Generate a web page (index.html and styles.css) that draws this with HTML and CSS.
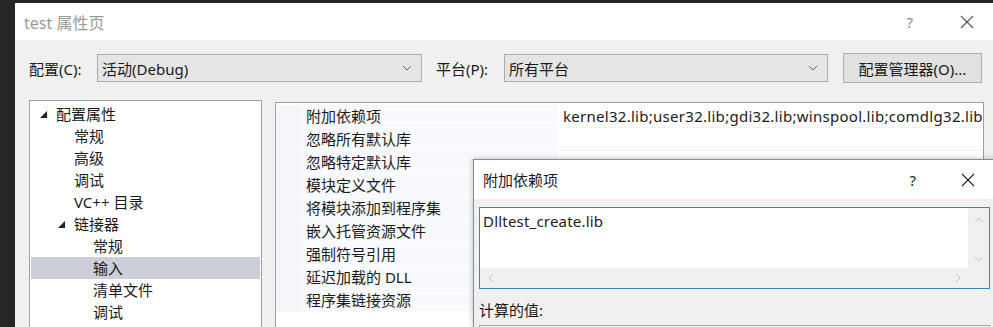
FILE: index.html
```html
<!DOCTYPE html>
<html lang="zh">
<head>
<meta charset="utf-8">
<title>test 属性页</title>
<link rel="stylesheet" href="styles.css">
</head>
<body>
<div class="screen">
  <div class="dialog">
    <div class="titlebar">
      <span class="title">test 属性页</span>
      <span class="tb-help">?</span>
      <span class="tb-close"><svg width="14" height="14" viewBox="0 0 14 14"><path d="M1 1L13 13M13 1L1 13" stroke="#555" stroke-width="1.1" fill="none"/></svg></span>
    </div>
    <div class="toolbar">
      <span class="lbl">配置(C):</span>
      <div class="select sel1"><span>活动(Debug)</span><svg class="chev" width="10" height="6" viewBox="0 0 10 6"><path d="M1 1L5 5L9 1" stroke="#666" fill="none"/></svg></div>
      <span class="lbl lbl2">平台(P):</span>
      <div class="select sel2"><span>所有平台</span><svg class="chev" width="10" height="6" viewBox="0 0 10 6"><path d="M1 1L5 5L9 1" stroke="#666" fill="none"/></svg></div>
      <div class="btn">配置管理器(O)...</div>
    </div>
    <div class="main">
      <div class="tree">
        <div class="node lv0"><svg class="tri" width="7" height="7" viewBox="0 0 7 7"><path d="M7 0L7 7L0 7Z" fill="#222"/></svg>配置属性</div>
        <div class="node lv1">常规</div>
        <div class="node lv1">高级</div>
        <div class="node lv1">调试</div>
        <div class="node lv1">VC++ 目录</div>
        <div class="node lv1b"><svg class="tri" width="7" height="7" viewBox="0 0 7 7"><path d="M7 0L7 7L0 7Z" fill="#222"/></svg>链接器</div>
        <div class="node lv2">常规</div>
        <div class="node lv2 sel">输入</div>
        <div class="node lv2">清单文件</div>
        <div class="node lv2">调试</div>
      </div>
      <div class="grid">
        <div class="row"><div class="gut"></div><div class="name">附加依赖项</div><div class="val">kernel32.lib;user32.lib;gdi32.lib;winspool.lib;comdlg32.lib</div></div>
        <div class="row"><div class="gut"></div><div class="name">忽略所有默认库</div><div class="val"></div></div>
        <div class="row"><div class="gut"></div><div class="name">忽略特定默认库</div><div class="val"></div></div>
        <div class="row"><div class="gut"></div><div class="name">模块定义文件</div><div class="val"></div></div>
        <div class="row"><div class="gut"></div><div class="name">将模块添加到程序集</div><div class="val"></div></div>
        <div class="row"><div class="gut"></div><div class="name">嵌入托管资源文件</div><div class="val"></div></div>
        <div class="row"><div class="gut"></div><div class="name">强制符号引用</div><div class="val"></div></div>
        <div class="row"><div class="gut"></div><div class="name">延迟加载的 DLL</div><div class="val"></div></div>
        <div class="row"><div class="gut"></div><div class="name">程序集链接资源</div><div class="val"></div></div>
      </div>
    </div>
  </div>

  <div class="subdlg">
    <div class="sub-title">
      <span>附加依赖项</span>
      <span class="sub-help">?</span>
      <span class="sub-close"><svg width="14" height="14" viewBox="0 0 14 14"><path d="M1 1L13 13M13 1L1 13" stroke="#222" stroke-width="1.1" fill="none"/></svg></span>
    </div>
    <div class="sub-body">
      <div class="editbox">
        <div class="edit-area">
          <div class="edit-text">Dlltest_create.lib</div>
          <div class="vscroll">
            <svg width="10" height="6" viewBox="0 0 10 6"><path d="M1 5L5 1L9 5" stroke="#c2c2c2" fill="none"/></svg>
            <svg width="10" height="6" viewBox="0 0 10 6"><path d="M1 1L5 5L9 1" stroke="#c2c2c2" fill="none"/></svg>
          </div>
        </div>
        <div class="hscroll">
          <svg width="6" height="10" viewBox="0 0 6 10"><path d="M5 1L1 5L5 9" stroke="#c2c2c2" fill="none"/></svg>
          <svg width="6" height="10" viewBox="0 0 6 10"><path d="M1 1L5 5L1 9" stroke="#c2c2c2" fill="none"/></svg>
          <div class="corner"></div>
        </div>
      </div>
      <div class="calc">计算的值:</div>
      <div class="calcbox"></div>
    </div>
  </div>
</div>
</body>
</html>
```

FILE: styles.css
```css
* { box-sizing: border-box; }
html, body { margin: 0; padding: 0; }
body {
  background: #262626;
  width: 993px;
  height: 327px;
  overflow: hidden;
  font-family: "Noto Sans", "Noto Sans CJK SC", sans-serif;
  font-size: 15px;
  color: #1a1a1a;
}
.screen {
  position: relative;
  width: 993px;
  height: 327px;
  padding: 3px 0 0 15px;
  overflow: hidden;
}
.dialog {
  background: #f0f0f0;
  height: 324px;
  overflow: hidden;
}
.titlebar {
  background: #fff;
  height: 37px;
  display: flex;
  align-items: center;
  padding-left: 9px;
}
.title {
  color: #9a9a9a;
  font-size: 16px;
  flex: 1;
}
.tb-help {
  color: #888;
  font-size: 15px;
  margin-right: 47px;
}
.tb-close {
  display: flex;
  margin-right: 19px;
}
.toolbar {
  display: flex;
  align-items: center;
  height: 60px;
  padding-left: 14px;
  padding-bottom: 4px;
}
.lbl { width: 68px; }
.lbl2 { margin-left: 14px; }
.select {
  height: 28px;
  background: #e5e5e5;
  border: 1px solid #acacac;
  display: flex;
  align-items: center;
  justify-content: space-between;
  padding: 0 6px 0 4px;
}
.sel1 { width: 325px; }
.sel2 { width: 324px; }
.chev { margin-right: 3px; }
.btn {
  margin-left: 15px;
  width: 139px;
  height: 30px;
  background: #e1e1e1;
  border: 1px solid #adadad;
  display: flex;
  align-items: center;
  justify-content: center;
}
.main {
  display: flex;
  align-items: flex-start;
  padding-left: 14px;
}
.tree {
  width: 233px;
  height: 230px;
  background: #fff;
  border: 1px solid #a0a0a0;
  padding: 2px 1px 0 1px;
}
.node {
  height: 22px;
  line-height: 22px;
  display: flex;
  align-items: center;
  white-space: nowrap;
}
.tri { margin-right: 9px; }
.lv0 { padding-left: 9px; }
.lv1 { padding-left: 43px; }
.lv1b { padding-left: 27px; }
.lv2 { padding-left: 62px; }
.sel { background: #cccfd9; }
.grid {
  margin-left: 13px;
  margin-top: 2px;
  width: 709px;
  height: 230px;
  background: #fff;
  border: 1px solid #a0a0a0;
  padding-top: 2px;
}
.row {
  display: flex;
  height: 23px;
}
.gut {
  width: 24px;
  background: #f4f6fa;
}
.name {
  width: 258px;
  padding-left: 6px;
  line-height: 22px;
  background: #f7f9fc;
  border-bottom: 1px solid #fff;
  white-space: nowrap;
}
.val {
  flex: 1;
  padding-left: 5px;
  line-height: 22px;
  border-bottom: 1px solid #f1f1f1;
  white-space: nowrap;
  overflow: hidden;
  letter-spacing: 0.28px;
}
.subdlg {
  position: absolute;
  left: 473px;
  top: 159px;
  width: 530px;
  height: 168px;
  overflow: hidden;
  background: #f0f0f0;
  border: 1px solid #8c8c8c;
  border-bottom: none;
  box-shadow: 0 0 6px rgba(0,0,0,0.25);
}
.sub-title {
  height: 39px;
  background: #fff;
  display: flex;
  align-items: center;
  padding-left: 9px;
}
.sub-title > span:first-child { flex: 1; }
.sub-help {
  font-size: 15px;
  margin-right: 45px;
  color: #222;
}
.sub-close {
  display: flex;
  margin-right: 27px;
}
.sub-body { padding: 8px 0 0 5px; }
.editbox {
  width: 511px;
  height: 82px;
  border: 1px solid #3a86bf;
  background: #fff;
  display: flex;
  flex-direction: column;
}
.edit-area {
  flex: 1;
  display: flex;
}
.edit-text {
  flex: 1;
  padding: 2px 0 0 3px;
  line-height: 22px;
  letter-spacing: 0.2px;
}
.vscroll {
  width: 21px;
  background: #f0f0f0;
  display: flex;
  flex-direction: column;
  align-items: center;
  justify-content: space-between;
  padding: 9px 0 6px;
}
.hscroll {
  height: 20px;
  background: #f0f0f0;
  display: flex;
  align-items: center;
  padding-left: 8px;
}
.hscroll svg:nth-child(2) { margin-left: auto; margin-right: 7px; }
.corner { width: 21px; height: 20px; background: #f0f0f0; }
.calc {
  margin-top: 11px;
  height: 20px;
  line-height: 20px;
}
.calcbox {
  margin-top: 5px;
  width: 511px;
  height: 40px;
  border: 1px solid #a8a8a8;
  background: #f5f5f5;
}
```
